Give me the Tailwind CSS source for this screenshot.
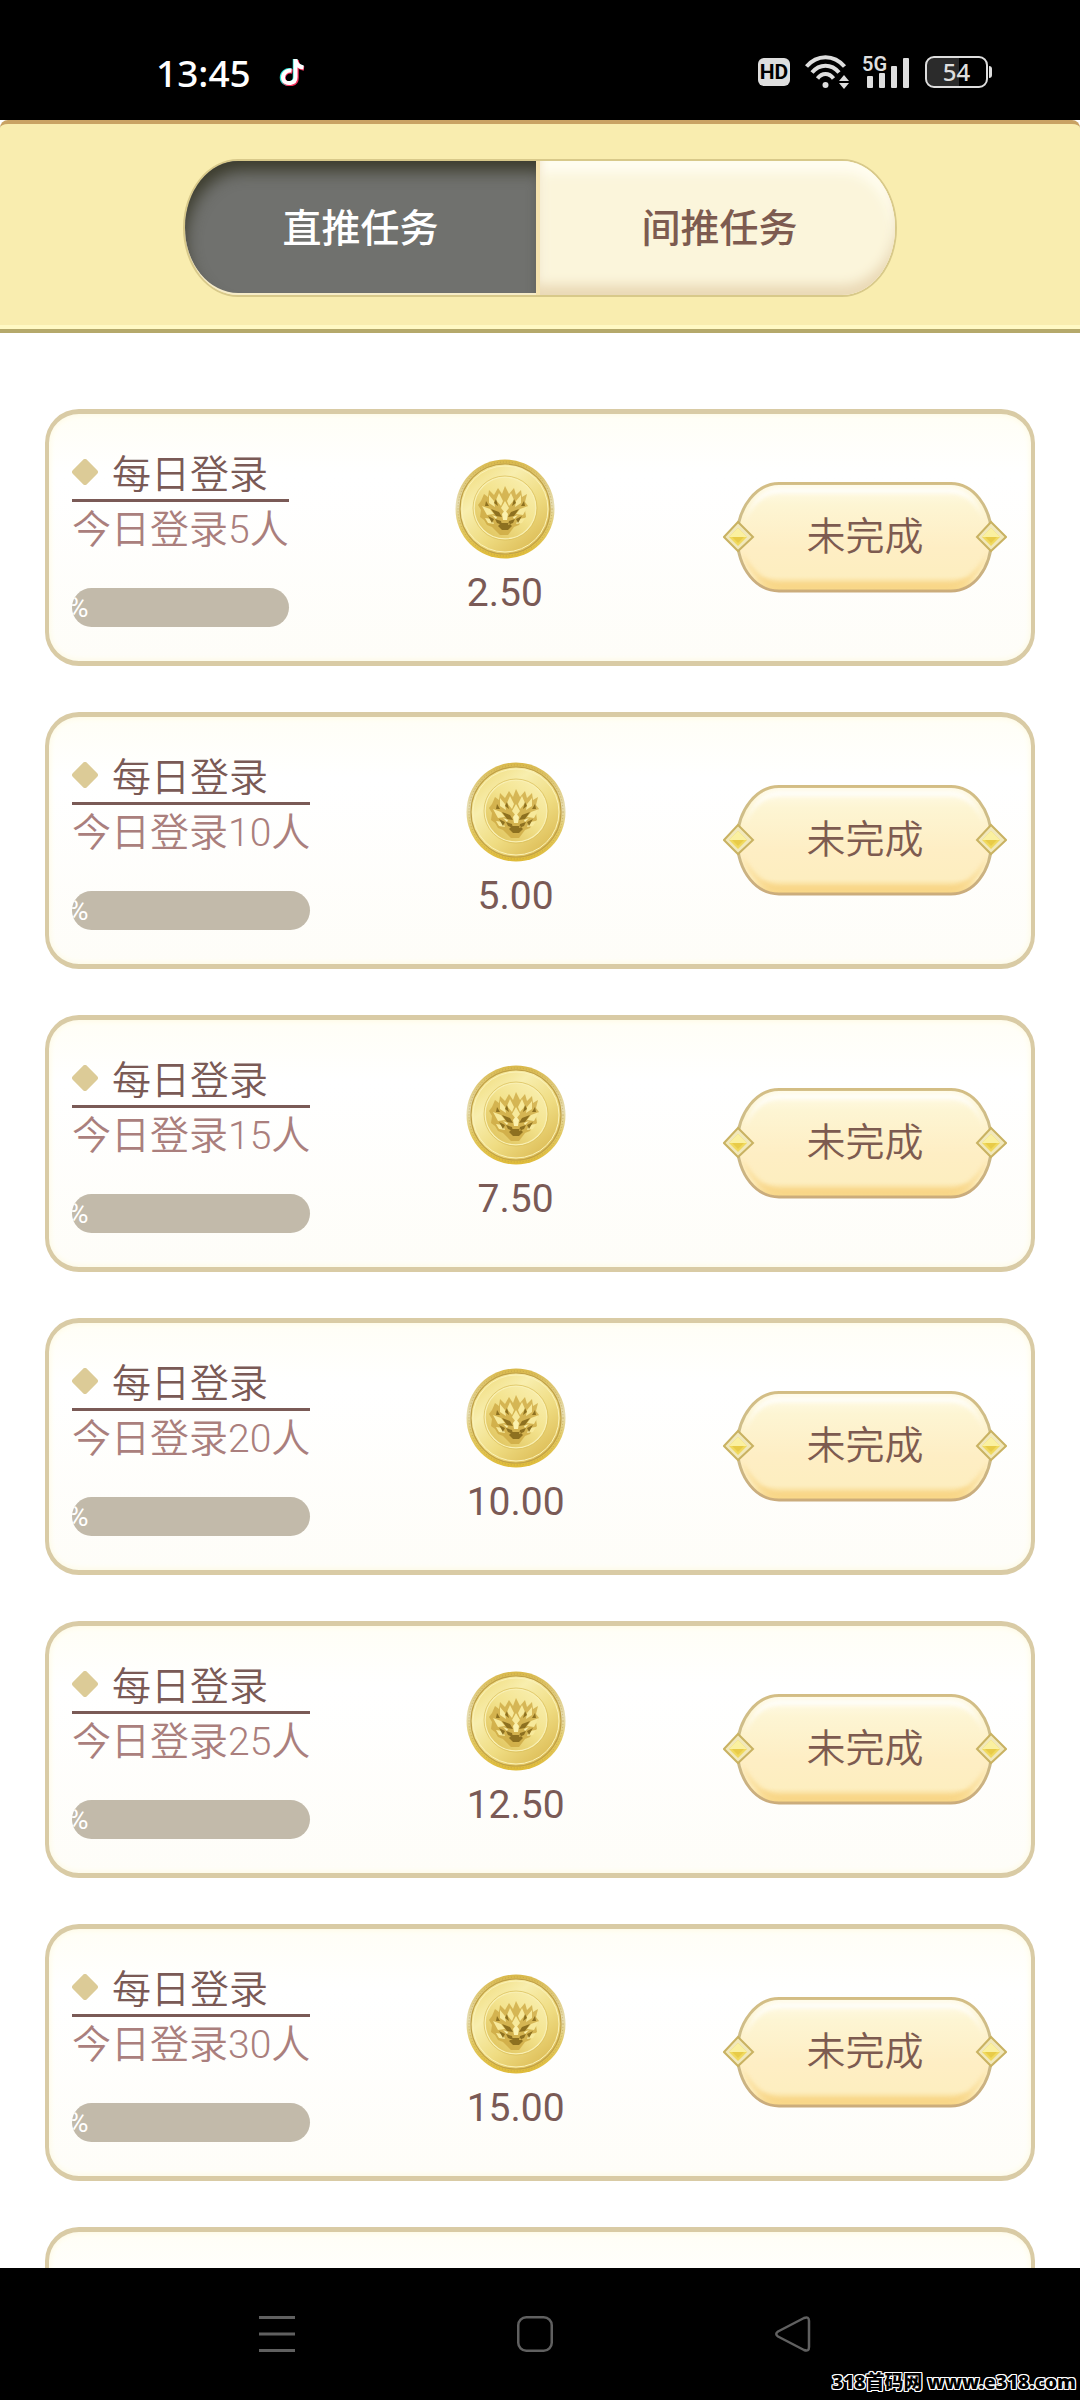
<!DOCTYPE html>
<html lang="zh-CN">
<head>
<meta charset="utf-8">
<meta name="viewport" content="width=device-width, initial-scale=1">
<title>直推任务</title>
<script src="https://cdn.jsdelivr.net/npm/@tailwindcss/browser@4"></script>
</head>
<body class="flex h-screen flex-col overflow-hidden bg-white font-['Roboto','Noto_Sans_CJK_SC',sans-serif] text-[39px] font-[350] text-[#7a5a56]">

<!-- shared artwork -->
<svg class="absolute h-0 w-0" aria-hidden="true">
  <defs>
    <linearGradient id="rim" x1="0" y1="0" x2="0" y2="1"><stop offset="0" stop-color="#d9b848"/><stop offset=".45" stop-color="#e6ddb2"/><stop offset=".7" stop-color="#e2c860"/><stop offset="1" stop-color="#dfbb38"/></linearGradient>
    <linearGradient id="face" x1=".1" y1="0" x2=".9" y2="1"><stop offset="0" stop-color="#efda78"/><stop offset=".3" stop-color="#f8eeae"/><stop offset=".6" stop-color="#efdc82"/><stop offset="1" stop-color="#d8b54c"/></linearGradient>
    <linearGradient id="dish" x1="1" y1="0" x2=".2" y2="1"><stop offset="0" stop-color="#faf1b6"/><stop offset=".5" stop-color="#f3e38e"/><stop offset="1" stop-color="#e0c45e"/></linearGradient>
    <linearGradient id="pill" x1="0" y1="0" x2="0" y2="1"><stop offset="0" stop-color="#fffbe9"/><stop offset=".2" stop-color="#fdf5d3"/><stop offset=".6" stop-color="#feeec4"/><stop offset=".86" stop-color="#fdeec0"/><stop offset="1" stop-color="#f8d684"/></linearGradient>
    <linearGradient id="edge" x1="0" y1="0" x2="0" y2="1"><stop offset="0" stop-color="#d3bd84"/><stop offset=".5" stop-color="#cbbd8c"/><stop offset="1" stop-color="#c9ab7c"/></linearGradient>
    <filter id="soft" x="-10%" y="-10%" width="120%" height="120%"><feGaussianBlur stdDeviation="2"/></filter>
  </defs>
  <symbol id="coin" viewBox="0 0 100 100">
    <circle cx="50" cy="50" r="49.5" fill="url(#rim)"/>
    <circle cx="50" cy="50" r="45" fill="url(#face)" stroke="#c0a046" stroke-width="1.2"/>
    <circle cx="50" cy="50" r="43" fill="none" stroke="#fbf2b8" stroke-width="1"/>
    <circle cx="50" cy="50" r="47" fill="none" stroke="#b79a49" stroke-width="1" stroke-dasharray="1 2" opacity=".6"/>
    <circle cx="50" cy="49" r="31" fill="url(#dish)" stroke="#f9f0b4" stroke-width="1.5"/>
    <circle cx="50" cy="49" r="32" fill="none" stroke="#d8bc55" stroke-width=".7"/>
    <path d="M29 35l4 3 1-7 5 5 4-7 4 6 3-8 4 8 5-6 2 7 5-5 1 7 5-3-2 8 3 4-3 4 1 7-4 3-3 5-5 2-3 4-3 4h-8l-4-4-4-4-5-2-3-5-4-3 1-7-3-5 3-4z" fill="#cba63f" opacity=".75"/>
    <path d="M34 36l5 6 1 6-6-4zM66 36l-5 6-1 6 6-4zM44 34l4 8-2 5-5-6zM56 34l-4 8 2 5 5-6zM27 47l8 3 4 5-7 1zM73 47l-8 3-4 5 7 1zM50 42l4 7-4 5-4-5zM30 59l7 1 2 5-6-1zM70 59l-7 1-2 5 6-1z" fill="#f7e99b"/>
    <path d="M36 50l8 3 3 5-6-1zM64 50l-8 3-3 5 6-1zM40 60l6 2 1 4-5-2zM60 60l-6 2-1 4 5-2zM33 57l6 3-2 4zM67 57l-6 3 2 4zM46 64h8l3 3-4 4h-6l-4-4zM39 44l2-4 2 7zM61 44l-2-4-2 7zM31 42l3 5-4 0zM69 42l-3 5 4 0z" fill="#8d7020"/>
    <path d="M47 55l3-4 3 4-1 6h-4zM37 56l5 2-1 2zM63 56l-5 2 1 2z" fill="#fbf1ae"/>
  </symbol>
  <symbol id="plate" viewBox="0 0 284 112">
    <path d="M56 1.500H228C250 1.500 268 24 269 55C268 88 250 109 228 109H56C34 109 15 88 14 55C15 24 34 1.500 56 1.500Z" fill="url(#pill)" stroke="url(#edge)" stroke-width="3"/>
    <path d="M19 70C25 90 38 105 56 106H228C246 105 258 90 265 70C255 88 245 98 228 100H56C39 98 29 88 19 70Z" fill="#f7cf78" opacity=".6" filter="url(#soft)"/>
    <path d="M22 40C28 18 40 6 58 6H226C244 6 254 18 261 38C252 20 243 11 226 11H58C42 11 30 20 22 40Z" fill="#fff" opacity=".9" filter="url(#soft)"/>
    <g id="gem"><path d="M1 55L15 40L30 55L15 69Z" fill="#f1e8bb" stroke="#c9b262" stroke-width="2"/><path d="M6 55L15 46L24 55L15 64Z" fill="#f0d95e"/><path d="M6 55L15 46L24 55H15Z" fill="#faf0a0"/><path d="M9 55H21L15 61Z" fill="#e8cb48"/></g>
    <use href="#gem" x="253"/>
  </symbol>
</svg>

<header class="flex h-[120px] shrink-0 items-center justify-between bg-black pt-6 pr-[88px] pl-[156px] text-[#dedede]">
  <div class="flex items-center gap-7">
    <time class="font-['Noto_Sans',sans-serif] text-[37px] leading-none font-medium text-white">13:45</time>
    <svg class="h-7 w-[26px]" viewBox="0 0 26 28" fill="none" stroke-width="4.500" aria-label="抖音">
      <path d="M12 12.500C7 11.500 3 15 3 19.500S7 26 10.500 25.500S16 23 16 19V1M16 2C17 7 20 9 24 9.500" stroke="#25e5dc"/>
      <path d="M13.500 13.500C8.500 12.500 4.500 15.500 4.500 20S8.500 26.500 12 26S17.500 23.500 17.500 20V2M17.500 3C18.500 8 21 10 25 10.500" stroke="#f5315b"/>
      <path d="M12.500 12.500C8 12 4 15 4 19.500S8 25.500 11.500 25S16.500 23 16.500 19V1M16.500 2C17.500 7 20 9 24.500 9.500" stroke="#fff" stroke-width="4"/>
    </svg>
  </div>
  <div class="flex items-center gap-[15px]">
    <span class="flex h-7 w-8 items-center justify-center rounded-md bg-[#dedede] font-['Roboto',sans-serif] text-[21px] leading-7 font-bold text-black">HD</span>
    <svg class="h-[34px] w-11" viewBox="0 0 44 34" fill="none" stroke="#dedede" stroke-width="4" aria-label="Wi-Fi">
      <path d="M1.500 11.500C12-1 29-1 39.500 11.500M7 17.500C14.500 8.500 26.500 8.500 34 17.500M12.500 23.500C17 17.500 24 17.500 28.500 23.500"/>
      <circle cx="20.500" cy="30" r="3" fill="#dedede" stroke="none"/>
      <path d="M39 20l5 6H34zM39 34l5-6H34z" fill="#dedede" stroke="none"/>
    </svg>
    <svg class="h-[38px] w-[46px] overflow-visible" viewBox="0 -4 46 38" fill="#dedede" aria-label="5G">
      <text x="-2" y="14" font-family="Roboto" font-size="20" font-weight="600">5G</text>
      <rect x="3" y="19" width="6" height="12" rx="1"/><rect x="15" y="16" width="6" height="15" rx="1"/><rect x="27" y="9" width="6" height="22" rx="1"/><rect x="39" y="1" width="6" height="30" rx="1"/>
    </svg>
    <div class="flex items-center gap-px">
      <span class="flex h-8 w-[63px] items-center justify-center rounded-[9px] border-2 border-[#dedede] bg-linear-to-r from-[#2b2b2b] from-54% to-black to-54% font-['Noto_Sans',sans-serif] text-2xl leading-7 font-medium">54</span>
      <span class="h-3 w-[3px] rounded-r bg-[#dedede]"></span>
    </div>
  </div>
</header>

<nav class="flex h-[213px] shrink-0 justify-center rounded-t-lg border-t-4 border-b-4 border-t-[#c9a263] border-b-[#b5a96b] bg-[#f9edaf] pt-[35px] shadow-[inset_0_-4px_0_#fff9c4]">
  <div class="flex h-[138px] w-[714px] gap-1 rounded-[56px/70px] border-2 border-[#d8c98a] bg-[#f6e3ae]">
    <button class="flex-1 rounded-l-[54px_68px] border-b-2 border-[#f6ecc8] bg-[#70716e] pt-1 font-medium text-white shadow-[inset_4px_14px_16px_-4px_#3b3b2c]">直推任务</button>
    <button class="flex-1 rounded-r-[54px_68px] bg-[#fbf5db] pt-0.5 pl-1 font-medium text-[#7d5b50] shadow-[inset_0_-12px_12px_-2px_#ead9b6,inset_0_12px_12px_#fffdf0]">间推任务</button>
  </div>
</nav>

<main class="min-h-0 flex-1 overflow-hidden px-[45px] pt-[76px]">
  <ul id="tasks" class="flex flex-col gap-[46px]"></ul>
</main>

<footer class="relative flex h-[132px] shrink-0 items-center bg-black">
  <div class="flex flex-1 items-center justify-between pr-[269px] pl-[259px]">
    <button aria-label="菜单"><svg class="h-9 w-9" viewBox="0 0 36 36" stroke="#606060" stroke-width="3"><path d="M0 1.500H36M0 18H36M0 34.500H36"/></svg></button>
    <button aria-label="主页"><svg class="h-9 w-9" viewBox="0 0 36 36" fill="none" stroke="#606060" stroke-width="2.500"><rect x="1.250" y="1.250" width="33.500" height="33.500" rx="8"/></svg></button>
    <button aria-label="返回"><svg class="h-9 w-9" viewBox="0 0 36 36" fill="none" stroke="#606060" stroke-width="2.500" stroke-linejoin="round"><path d="M3 15.500L29 2Q34 0 34 5V31Q34 36 29 34L3 20.500Q-.500 18 3 15.500Z"/></svg></button>
  </div>
  <a href="http://www.e318.com" class="absolute right-1 bottom-1.5 font-['Noto_Sans','Noto_Sans_CJK_SC',sans-serif] text-[19px] leading-6 font-black whitespace-nowrap text-black [text-shadow:1px_0_#fff,-1px_0_#fff,0_1px_#fff,0_-1px_#fff,1px_1px_#fff,-1px_-1px_#fff,1px_-1px_#fff,-1px_1px_#fff]">318首码网 www.e318.com</a>
</footer>

<template id="task">
  <li class="flex h-[257px] shrink-0 items-center justify-between rounded-[34px] border-x-4 border-y-5 border-[#d9cba5] bg-linear-to-b from-[#fffef6] via-white via-25% to-[#fefdf8] pr-6 pl-[23px] shadow-[inset_0_0_6px_#fdf9dc]">
    <div class="pb-1">
      <h2 class="flex h-[58px] items-center gap-[14px] border-b-3 border-[#7a5a56] font-[350]">
        <svg class="h-[26px] w-[26px]" viewBox="0 0 26 26" aria-hidden="true"><rect x="3" y="3" width="20" height="20" rx="3" transform="rotate(45 13 13)" fill="#dccb97"/></svg>
        <span class="pt-1.5 leading-[50px]">每日登录</span>
      </h2>
      <p data-goal class="h-[54px] leading-[56px] text-[#aa7f7d]"></p>
      <div role="progressbar" aria-valuenow="0" aria-label="进度" class="relative mt-8 h-[39px] overflow-hidden rounded-full bg-[#c2baaa]">
        <span class="absolute top-0 -left-1 text-[28px] leading-[39px] font-normal text-white">%</span>
      </div>
    </div>
    <div class="flex flex-col items-center pr-0.5 pb-0.5">
      <svg class="h-[100px] w-[100px]" aria-hidden="true"><use href="#coin"/></svg>
      <span data-reward class="mt-3 leading-[44px] font-normal"></span>
    </div>
    <button class="relative h-[112px] w-[284px] font-[350] text-[#7d5b50]">
      <svg class="absolute inset-0 h-full w-full" aria-hidden="true"><use href="#plate"/></svg>
      <span class="relative">未完成</span>
    </button>
  </li>
</template>

<script>
  const list = document.getElementById('tasks');
  const tpl = document.getElementById('task');
  for (const [goal, reward] of [[5, '2.50'], [10, '5.00'], [15, '7.50'], [20, '10.00'], [25, '12.50'], [30, '15.00'], [35, '17.50']]) {
    const row = tpl.content.cloneNode(true);
    row.querySelector('[data-goal]').textContent = `今日登录${goal}人`;
    row.querySelector('[data-reward]').textContent = reward;
    list.append(row);
  }
</script>
</body>
</html>
